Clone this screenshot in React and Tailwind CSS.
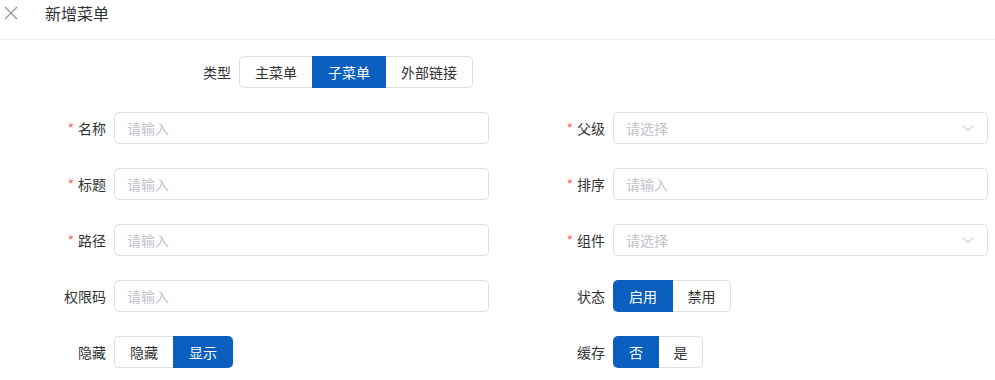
import { useState } from "react";

const font = { fontFamily: '"Noto Sans CJK SC", "Noto Sans", sans-serif' };

function Label({ text, required }) {
  return (
    <label className="w-[100px] shrink-0 pr-2 text-right text-sm text-[#333]">
      {required && <span className="mr-1 text-[#f56c6c]">*</span>}
      {text}
    </label>
  );
}

function Input({ placeholder = "请输入", select }) {
  return (
    <div className="flex h-8 flex-1 items-center rounded-[5px] border border-[#dcdfe6] bg-white px-3">
      <span className="flex-1 text-sm text-[#c0c4cc]">{placeholder}</span>
      {select && (
        <svg width="12" height="12" viewBox="0 0 12 12" className="mr-[1px]">
          <path d="M1 3.5 L6 8.5 L11 3.5" fill="none" stroke="#b8bcc4" strokeWidth="1" />
        </svg>
      )}
    </div>
  );
}

function Segmented({ options, value, onChange, widths }) {
  return (
    <div className="flex h-8">
      {options.map((opt, i) => {
        const active = opt === value;
        return (
          <button
            key={opt}
            onClick={() => onChange(opt)}
            className={`flex items-center justify-center text-sm ${widths[i]} ${
              active
                ? "bg-[#0b5fbe] text-white"
                : "border-y border-[#dcdfe6] bg-white text-[#333]"
            } ${i === 0 ? "rounded-l-[5px]" : ""} ${
              i === options.length - 1 ? "rounded-r-[5px]" : ""
            } ${!active && i === 0 ? "border-l" : ""} ${
              !active && i === options.length - 1 ? "border-r" : ""
            }`}
          >
            {opt}
          </button>
        );
      })}
    </div>
  );
}

export default function App() {
  const [type, setType] = useState("子菜单");
  const [hidden, setHidden] = useState("显示");
  const [status, setStatus] = useState("启用");
  const [cache, setCache] = useState("否");

  return (
    <div className="h-[380px] w-[995px] overflow-hidden bg-white" style={font}>
      {/* Header */}
      <div className="flex h-10 items-center border-b border-[#ebeef5]">
        <svg width="14" height="14" viewBox="0 0 14 14" className="ml-[4px] mt-[-14px]">
          <path d="M1 1 L13 13 M13 1 L1 13" stroke="#999" strokeWidth="1.4" />
        </svg>
        <span className="ml-[27px] mt-[-14px] text-base text-[#333]">新增菜单</span>
      </div>

      {/* Type */}
      <div className="mt-4 flex h-8 items-center pl-[139px]">
        <Label text="类型" />
        <Segmented
          options={["主菜单", "子菜单", "外部链接"]}
          value={type}
          onChange={setType}
          widths={["w-[73px]", "w-[74px]", "w-[87px]"]}
        />
      </div>

      {/* Fields */}
      <div className="mt-6 grid grid-cols-2 gap-x-6 gap-y-6 pl-[14px] pr-[7px]">
        <div className="flex items-center">
          <Label text="名称" required />
          <Input />
        </div>
        <div className="flex items-center">
          <Label text="父级" required />
          <Input placeholder="请选择" select />
        </div>
        <div className="flex items-center">
          <Label text="标题" required />
          <Input />
        </div>
        <div className="flex items-center">
          <Label text="排序" required />
          <Input />
        </div>
        <div className="flex items-center">
          <Label text="路径" required />
          <Input />
        </div>
        <div className="flex items-center">
          <Label text="组件" required />
          <Input placeholder="请选择" select />
        </div>
        <div className="flex items-center">
          <Label text="权限码" />
          <Input />
        </div>
        <div className="flex items-center">
          <Label text="状态" />
          <Segmented
            options={["启用", "禁用"]}
            value={status}
            onChange={setStatus}
            widths={["w-[60px]", "w-[58px]"]}
          />
        </div>
        <div className="flex items-center">
          <Label text="隐藏" />
          <Segmented
            options={["隐藏", "显示"]}
            value={hidden}
            onChange={setHidden}
            widths={["w-[59px]", "w-[60px]"]}
          />
        </div>
        <div className="flex items-center">
          <Label text="缓存" />
          <Segmented
            options={["否", "是"]}
            value={cache}
            onChange={setCache}
            widths={["w-[46px]", "w-[44px]"]}
          />
        </div>
      </div>
    </div>
  );
}
